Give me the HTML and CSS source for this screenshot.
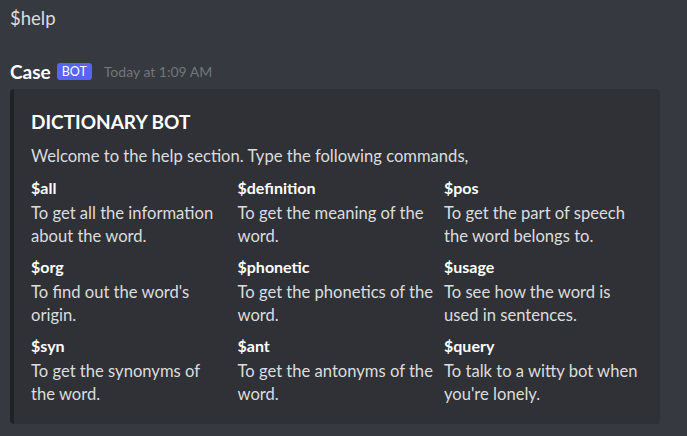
FILE: index.html
```html
<!DOCTYPE html>
<html>
<head>
<meta charset="utf-8">
<link rel="stylesheet" href="styles.css">
</head>
<body>
<div class="chat">
  <div class="msg">$help</div>
  <div class="header">
    <span class="author">Case</span>
    <span class="badge">BOT</span>
    <span class="time">Today at 1:09 AM</span>
  </div>
  <div class="embed">
    <div class="title">DICTIONARY BOT</div>
    <div class="desc">Welcome to the help section. Type the following commands,</div>
    <div class="fields">
      <div class="field"><div class="fname">$all</div><div class="fval">To get all the information<br>about the word.</div></div>
      <div class="field"><div class="fname">$definition</div><div class="fval">To get the meaning of the<br>word.</div></div>
      <div class="field"><div class="fname">$pos</div><div class="fval">To get the part of speech<br>the word belongs to.</div></div>
      <div class="field"><div class="fname">$org</div><div class="fval">To find out the word's<br>origin.</div></div>
      <div class="field"><div class="fname">$phonetic</div><div class="fval">To get the phonetics of the<br>word.</div></div>
      <div class="field"><div class="fname">$usage</div><div class="fval">To see how the word is<br>used in sentences.</div></div>
      <div class="field"><div class="fname">$syn</div><div class="fval">To get the synonyms of<br>the word.</div></div>
      <div class="field"><div class="fname">$ant</div><div class="fval">To get the antonyms of the<br>word.</div></div>
      <div class="field"><div class="fname">$query</div><div class="fval">To talk to a witty bot when<br>you're lonely.</div></div>
    </div>
  </div>
</div>
</body>
</html>
```
FILE: styles.css
```css
html, body {
  margin: 0;
  padding: 0;
  background: #36393f;
  height: 100%;
}
body {
  font-family: "Lato", "Open Sans", sans-serif;
  color: #dcddde;
  overflow: hidden;
}
.chat {
  padding: 6px 0 0 10px;
}
.msg {
  font-size: 18.5px;
  line-height: 24px;
  color: #dcddde;
}
.header {
  display: flex;
  align-items: center;
  margin-top: 29px;
  height: 24px;
}
.author {
  font-size: 19px;
  font-weight: 700;
  color: #ffffff;
}
.badge {
  margin-left: 6px;
  background: #5865f2;
  color: #fff;
  font-size: 12.5px;
  line-height: 15px;
  padding: 1px 5px;
  border-radius: 3px;
  font-weight: 400;
}
.time {
  margin-left: 12px;
  font-size: 14px;
  color: #72767d;
}
.embed {
  margin-top: 6px;
  background: #2f3136;
  border-left: 4px solid #202225;
  border-radius: 4px;
  padding: 22px 0 18px 17px;
  box-sizing: border-box;
  width: 650px;
}
.title {
  font-size: 19px;
  font-weight: 700;
  color: #ffffff;
  line-height: 22px;
}
.desc {
  margin-top: 12px;
  font-size: 16.6px;
  line-height: 23px;
}
.fields {
  margin-top: 9px;
  display: grid;
  grid-template-columns: repeat(3, 206.5px);
  row-gap: 8px;
}
.fname {
  font-size: 16px;
  font-weight: 700;
  color: #ffffff;
  line-height: 22px;
}
.fval {
  margin-top: 3px;
  font-size: 16.6px;
  line-height: 23px;
  white-space: nowrap;
}
```
